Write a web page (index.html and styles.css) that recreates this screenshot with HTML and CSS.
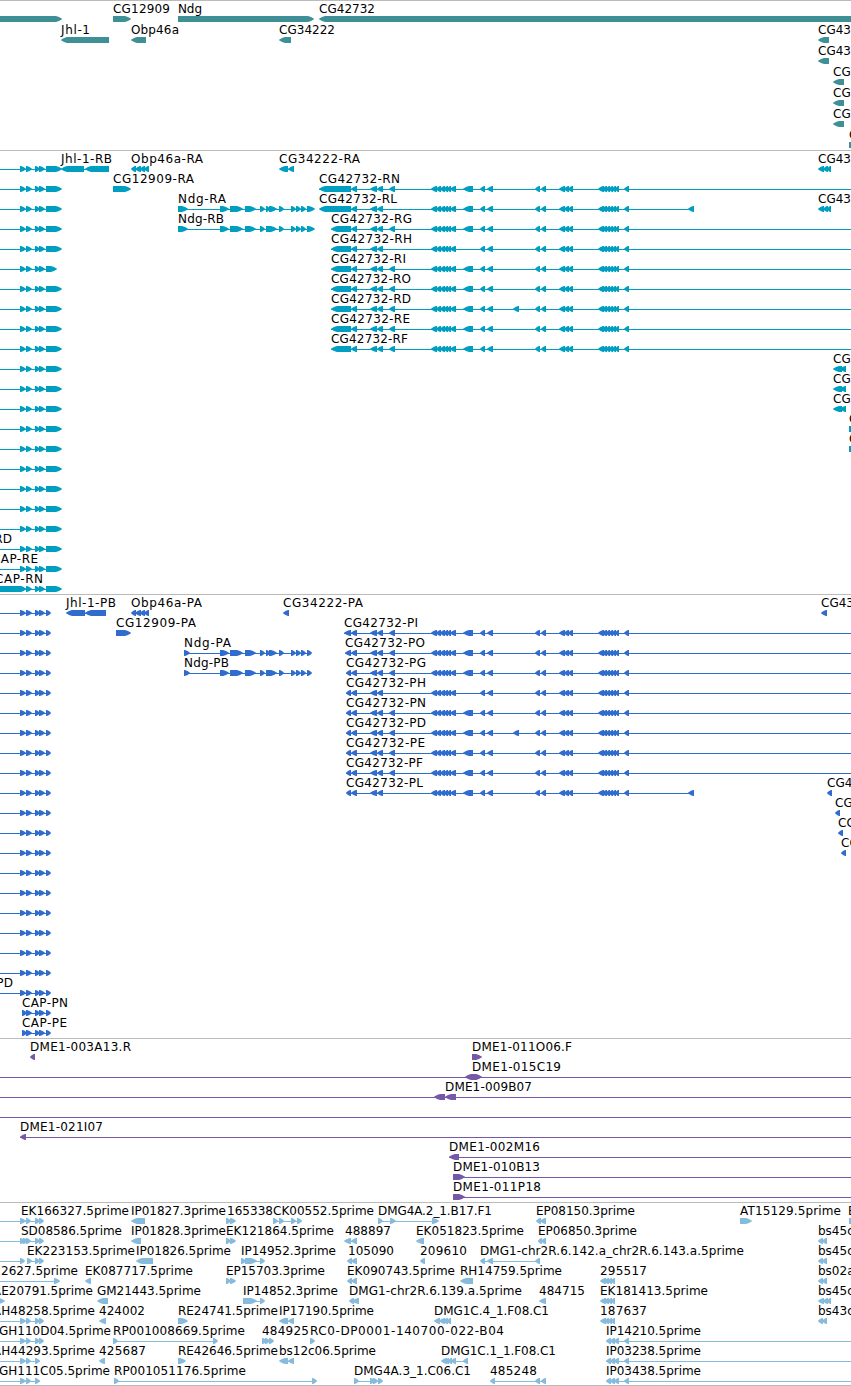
FILE: index.html
```html
<!DOCTYPE html>
<html lang="en">
<head>
  <meta charset="UTF-8">
  <meta name="viewport" content="width=device-width, initial-scale=1.0">
  <title>Genome tracks</title>
  <link rel="stylesheet" href="styles.css">
</head>
<body>

  <div class="tracks">
    <div class="track genes" id="genes"></div>
    <div class="track transcripts" id="transcripts"></div>
    <div class="track proteins" id="proteins"></div>
    <div class="track clones" id="clones"></div>
    <div class="track ests" id="ests"></div>
  </div>

  <script src="script.js"></script>
</body>
</html>
```
FILE: styles.css
```css
body {
  margin: 0;
  background-color: #fff;
  font-family: "DejaVu Sans", sans-serif;
  font-size: 12px;
  overflow: hidden;
}

.tracks {
  display: flex;
  flex-direction: column;
  border-bottom: 1px solid #bbb;
}

.track {
  box-sizing: border-box;
  border-top: 1px solid #bbb;
  overflow: hidden;
}

.track svg {
  display: block;
  width: 100%;
  height: 100%;
}

.track text {
  fill: #000;
}

.genes {
  height: 150px;
  color: #3f8f96;
}

.transcripts {
  height: 444px;
  color: #009fc1;
}

.proteins {
  height: 444px;
  color: #306ccd;
}

.clones {
  height: 164px;
  color: #7558a6;
}

.ests {
  height: 183px;
  color: #87bbdd;
}
```
FILE: script.js
```js
// feature: [row, direction, exons, label, labelStart, labelEnd, lineStart, lineEnd]
const END = 860;

// exons shared by the CG42732 isoforms
const A = '351,357 370,377 377,383 ';
const B = '389,395 ';
const C = '431,437 436,441 440,445 444,448 447,451 450,456 ';
const D = '463,473 ';
const E = '480,485 487,493 ';
const F = '535,540 541,546 559,565 564,569 568,573 598,604 602,607 606,610 609,613 612,616 615,619 624,629';

const genes = [
  [0, '>', '-20,62'],
  [0, '>', '113,131', 'CG12909', 113, 170],
  [0, '>', '178,314', 'Ndg', 178, 202],
  [0, '<', '319,870', 'CG42732', 319, 375],
  [1, '<', '61,109', 'Jhl-1', 61, 90],
  [1, '<', '131,146', 'Obp46a', 131, 179],
  [1, '<', '279,291', 'CG34222', 279, 335],
  [1, '<', '818,829', 'CG43', 818],
  [2, '<', '818,829', 'CG43', 818],
  [3, '<', '833,844', 'CG', 833],
  [4, '<', '833,844', 'CG', 833],
  [5, '<', '833,844', 'CG', 833],
  [6, '>', '849,870', 'C', 849]
];

const ndgStart = '220,229 230,243 245,256 260,265 ';
const ndgEnd = '279,284 291,296 296,301 301,306 ';

const transcripts = [
  [0, '<', '61,84 85,109', 'Jhl-1-RB', 61, 112],
  [0, '<', '131,136 135,141 140,145 144,149', 'Obp46a-RA', 131, 203],
  [0, '<', '279,288 288,294', 'CG34222-RA', 279, 360],
  [0, '<', '818,824 823,828 827,831', 'CG43', 818],
  [1, '>', '113,131', 'CG12909-RA', 113, 194],
  [1, '<', '319,351 ' + A + B + C + D + E + F, 'CG42732-RN', 319, 400, 319, END],
  [2, '>', '178,188 ' + ndgStart + '266,270 269,277 ' + ndgEnd + '307,315', 'Ndg-RA', 178, 226],
  [2, '<', '319,351 ' + A + C + D + E + F + ' 688,694', 'CG42732-RL', 319, 397],
  [2, '<', '818,824 823,828 827,831', 'CG43', 818],
  [3, '>', '178,188 ' + ndgStart + '266,277 ' + ndgEnd + '307,315', 'Ndg-RB', 178, 224],
  [3, '<', '331,351 ' + A + B + C + D + E + F, 'CG42732-RG', 331, 412, 331, END],
  [4, '<', '331,351 ' + A + C + E + F, 'CG42732-RH', 331, 412, 331, END],
  [5, '<', '331,351 ' + A + B + C + D + E + F, 'CG42732-RI', 331, 406, 331, END],
  [6, '<', '331,351 ' + A + B + C + D + E + F, 'CG42732-RO', 331, 411, 331, END],
  [7, '<', '331,351 ' + A + B + C + D + E + '513,519 ' + F, 'CG42732-RD', 331, 411, 331, END],
  [8, '<', '331,351 ' + A + B + C + D + E + F, 'CG42732-RE', 331, 410, 331, END],
  [9, '<', '331,351 ' + A + B + C + D + E + F, 'CG42732-RF', 331, 408, 331, END],
  [10, '<', '833,842 840,846', 'CG', 833],
  [11, '<', '833,842 840,846', 'CG', 833],
  [12, '<', '833,842 840,846', 'CG', 833],
  [13, '>', '849,870', 'C', 849],
  [14, '>', '849,870', 'C', 849],
  [19, '>', '', 'CAP-RD', -34, 12],
  [20, '>', '', 'CAP-RE', -8, 38],
  [21, '>', '-20,26', 'CAP-RN', -5, 43]
];
for (let row = 0; row < 22; row++) {
  const last = row === 5 ? 57 : 62;
  transcripts.push([row, '>', '20,26 26,32 35,40 39,45 46,' + last, '', 0, 0, -10, 50]);
}

const proteins = [
  [0, '<', '66,85 85,106', 'Jhl-1-PB', 66, 116],
  [0, '<', '131,136 135,141 140,145 144,149', 'Obp46a-PA', 131, 202],
  [0, '<', '283,289', 'CG34222-PA', 283, 363],
  [0, '<', '821,827', 'CG43', 821],
  [1, '>', '116,131', 'CG12909-PA', 116, 196],
  [1, '<', '344,351 ' + A + B + C + D + E + F, 'CG42732-PI', 344, 418, 344, END],
  [2, '>', '184,190 ' + ndgStart + '266,270 269,277 ' + ndgEnd + '307,312', 'Ndg-PA', 184, 231],
  [2, '<', '345,351 ' + A + B + C + D + E + F, 'CG42732-PO', 345, 425, 345, END],
  [3, '>', '184,190 ' + ndgStart + '266,277 ' + ndgEnd + '307,312', 'Ndg-PB', 184, 229],
  [3, '<', '346,351 ' + A + B + C + D + E + F, 'CG42732-PG', 346, 426, 346, END],
  [4, '<', '346,351 ' + A + C + E + F, 'CG42732-PH', 346, 426, 346, END],
  [5, '<', '346,351 ' + A + B + C + D + E + F, 'CG42732-PN', 346, 426, 346, END],
  [6, '<', '346,351 ' + A + B + C + D + E + '513,519 ' + F, 'CG42732-PD', 346, 426, 346, END],
  [7, '<', '346,351 ' + A + B + C + D + E + F, 'CG42732-PE', 346, 425, 346, END],
  [8, '<', '346,351 ' + A + B + C + D + E + F, 'CG42732-PF', 346, 423, 346, END],
  [9, '<', '346,351 ' + A + C + D + E + F + ' 688,694', 'CG42732-PL', 346, 423],
  [9, '<', '827,832', 'CG4', 827],
  [10, '<', '835,840', 'CG', 835],
  [11, '<', '838,843', 'CG', 838],
  [12, '<', '841,846', 'CG', 841],
  [19, '>', '', 'CAP-PD', -33, 13],
  [20, '>', '22,27 26,32 35,40 39,45 46,51', 'CAP-PN', 22, 68],
  [21, '>', '22,27 26,32 35,40 39,45 46,51', 'CAP-PE', 22, 67]
];
for (let row = 0; row < 20; row++) {
  proteins.push([row, '>', '20,26 26,32 35,40 39,45 46,51', '', 0, 0, -10, 50]);
}

const clones = [
  [0, '<', '30,35', 'DME1-003A13.R', 30, 131],
  [0, '>', '472,482', 'DME1-011O06.F', 472, 572],
  [1, '<', '465,477', 'DME1-015C19', 472, 561, -10, END],
  [1, '>', '472,482'],
  [2, '<', '434,445 445,456', 'DME1-009B07', 445, 532, -10, END],
  [3, '>', '', '', 0, 0, -10, END],
  [4, '<', '20,26', 'DME1-021I07', 20, 103, 20, END],
  [5, '<', '449,459', 'DME1-002M16', 449, 540, 449, END],
  [6, '>', '453,465', 'DME1-010B13', 453, 540, 453, END],
  [7, '>', '453,465', 'DME1-011P18', 453, 541, 453, END]
];

const ests = [
  [0, '>', '20,26 26,31 35,40 39,44', 'EK166327.5prime', 21, 129, -10, 40],
  [0, '<', '131,145', 'IP01827.3prime', 131, 226],
  [0, '>', '226,231 230,236', '165338', 227, 273],
  [0, '>', '273,278 279,284 291,296 297,302', 'CK00552.5prime', 273, 374],
  [0, '>', '378,383 390,396 432,439', 'DMG4A.2_1.B17.F1', 378, 492],
  [0, '<', '536,541 540,546', 'EP08150.3prime', 536, 635],
  [0, '>', '740,752', 'AT15129.5prime', 740, 841],
  [0, '>', '849,860', 'E', 848],
  [1, '>', '20,25 23,28 26,31 35,40 39,44', 'SD08586.5prime', 21, 122, -10, 40],
  [1, '<', '131,141', 'IP01828.3prime', 131, 226],
  [1, '>', '226,231 230,236', 'EK121864.5prime', 226, 334],
  [1, '<', '344,351 351,357', '488897', 345, 391],
  [1, '<', '416,424', 'EK051823.5prime', 416, 524],
  [1, '<', '538,542 541,546', 'EP06850.3prime', 538, 637],
  [1, '<', '818,823 822,827', 'bs45c', 818],
  [2, '>', '20,25', '', 0, 0, -10, 20],
  [2, '>', '27,32 35,40 39,44', 'EK223153.5prime', 27, 135],
  [2, '<', '136,153', 'IP01826.5prime', 136, 231],
  [2, '>', '241,246 245,257 260,265', 'IP14952.3prime', 241, 336],
  [2, '<', '347,352 351,357', '105090', 348, 394],
  [2, '<', '420,425', '209610', 420, 467],
  [2, '<', '480,485 487,493 535,540', 'DMG1-chr2R.6.142.a_chr2R.6.143.a.5prime', 480, 744],
  [2, '<', '818,823 822,827', 'bs45c', 818],
  [3, '>', '54,60', '2627.5prime', 1, 78, -10, 54],
  [3, '<', '85,91', 'EK087717.5prime', 85, 193],
  [3, '>', '226,231 230,236', 'EP15703.3prime', 226, 325],
  [3, '<', '347,352 351,357', 'EK090743.5prime', 347, 455],
  [3, '<', '460,473', 'RH14759.5prime', 460, 562],
  [3, '<', '600,606 604,609 608,612 611,615', '295517', 600, 647],
  [3, '<', '818,823 822,827', 'bs02a', 818],
  [4, '>', '-4,5', 'RE20791.5prime', -7, 93],
  [4, '<', '97,108', 'GM21443.5prime', 97, 201],
  [4, '>', '243,257 260,265', 'IP14852.3prime', 243, 338],
  [4, '<', '349,354 352,359', 'DMG1-chr2R.6.139.a.5prime', 349, 522],
  [4, '<', '539,546', '484715', 539, 585],
  [4, '<', '600,606 604,609 608,612 611,615', 'EK181413.5prime', 600, 708],
  [4, '<', '818,824 823,828 827,831', 'bs45c', 818],
  [5, '>', '20,26 26,31 35,40 39,44', 'RH48258.5prime', -7, 95, -10, 40],
  [5, '<', '99,106', '424002', 99, 145],
  [5, '>', '178,188', 'RE24741.5prime', 178, 278],
  [5, '<', '279,288 288,294', 'IP17190.5prime', 279, 374],
  [5, '<', '434,440 439,445 443,448 447,451', 'DMG1C.4_1.F08.C1', 434, 549],
  [5, '<', '600,606 604,609 608,612 611,615', '187637', 600, 647],
  [5, '<', '818,823 822,827', 'bs43c', 818],
  [6, '>', '20,26 26,31 35,40 39,44', 'GH110D04.5prime', -1, 111, -10, 40],
  [6, '>', '113,118 213,218', 'RP001008669.5prime', 113, 245],
  [6, '>', '262,267 265,270 269,274', '484925', 262, 309],
  [6, '>', '310,315', 'RC0-DP0001-140700-022-B04', 310, 504],
  [6, '<', '606,611 610,615 614,619 624,629', 'IP14210.5prime', 606, 701, 606, END],
  [7, '>', '20,26 26,31 35,40', 'RH44293.5prime', -7, 95, -10, 40],
  [7, '<', '99,105', '425687', 99, 146],
  [7, '>', '178,186', 'RE42646.5prime', 178, 278],
  [7, '<', '279,288 288,294', 'bs12c06.5prime', 279, 376],
  [7, '<', '441,447 445,449 448,452 451,456 463,468', 'DMG1C.1_1.F08.C1', 441, 556],
  [7, '<', '606,611 610,615 614,619 624,629', 'IP03238.5prime', 606, 701, 606, END],
  [8, '>', '20,26 26,31 35,40', 'GH111C05.5prime', -1, 110, -10, 40],
  [8, '>', '114,119 312,317', 'RP001051176.5prime', 114, 246],
  [8, '>', '354,359 370,375 373,378 378,383', 'DMG4A.3_1.C06.C1', 354, 471],
  [8, '<', '490,495 535,540 541,546', '485248', 490, 537],
  [8, '<', '606,611 610,615 614,619 624,629', 'IP03438.5prime', 606, 701, 606, END]
];

function arrow(start, end, dir, y) {
  const head = Math.min(6, end - start - 1);
  const tip = dir === '>' ? end : start;
  const back = dir === '>' ? start : end;
  const neck = dir === '>' ? end - head : start + head;
  // slightly rounded shoulders
  const mid = (neck + tip) / 2;
  return `<polygon points="${back},${y} ${neck},${y} ${mid},${y + 1} ${tip},${y + 2.7} ${tip},${y + 3.3} ${mid},${y + 5} ${neck},${y + 6} ${back},${y + 6}"/>`;
}

function drawTrack(id, features, rowHeight) {
  let out = '';
  let labels = '';
  features.forEach(([row, dir, exonText, label, labelStart, labelEnd, lineStart, lineEnd]) => {
    const y = row * rowHeight + 15;
    const exons = exonText ? exonText.split(' ').map(e => e.split(',').map(Number)) : [];
    if (lineStart === undefined && exons.length > 1) {
      lineStart = exons[0][0] + 1;
      lineEnd = exons[exons.length - 1][1] - 1;
    }
    if (lineStart !== undefined) {
      out += `<rect x="${lineStart}" y="${y + 3}" width="${lineEnd - lineStart}" height="1"/>`;
    }
    exons.forEach(([start, end]) => {
      out += arrow(start, end, dir, y);
    });
    if (label) {
      const fit = labelEnd === undefined ? '' : ` textLength="${labelEnd - labelStart}"`;
      labels += `<text x="${labelStart}" y="${y - 3}"${fit}>${label}</text>`;
    }
  });
  document.getElementById(id).innerHTML = `<svg fill="currentColor">${out}${labels}</svg>`;
}

drawTrack('genes', genes, 21);
drawTrack('transcripts', transcripts, 20);
drawTrack('proteins', proteins, 20);
drawTrack('clones', clones, 20);
drawTrack('ests', ests, 20);
```
